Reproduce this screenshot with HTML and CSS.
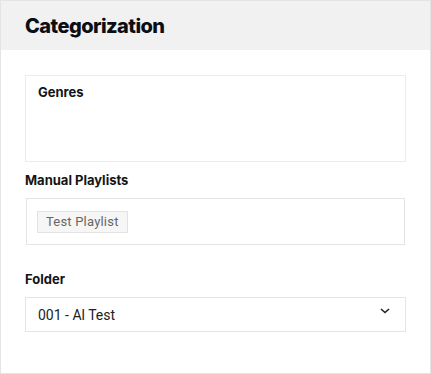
FILE: index.html
```html
<!DOCTYPE html>
<html>
<head>
<meta charset="utf-8">
<link rel="stylesheet" href="styles.css">
</head>
<body>
<div class="panel">
  <div class="header"><h2 class="title">Categorization</h2></div>
  <div class="content">
    <div class="genres">
      <div class="label">Genres</div>
    </div>
    <div class="field playlists">
      <div class="label">Manual Playlists</div>
      <div class="tagbox"><span class="tag">Test Playlist</span></div>
    </div>
    <div class="field folder">
      <div class="label">Folder</div>
      <div class="select">
        <span>001 - Al Test</span>
        <svg class="chev" width="10" height="6" viewBox="0 0 10 6"><path d="M1 1 L5 4.5 L9 1" fill="none" stroke="#222" stroke-width="1.6"/></svg>
      </div>
    </div>
  </div>
</div>
</body>
</html>
```
FILE: styles.css
```css
* { box-sizing: border-box; }
body { margin: 0; font-family: Roboto, "Liberation Sans", sans-serif; color: #111; }
.panel { width: 431px; height: 374px; border: 1px solid #e4e4e4; background: #fff; }
.header { height: 49px; background: #f1f1f1; padding: 0 24px; display: flex; align-items: center; }
.title { margin: 0; font-family: Inter, Roboto, sans-serif; font-size: 20px; font-weight: 800; color: #0d0d14; letter-spacing: -0.55px; }
.content { padding: 25px 24px 0 24px; display: flex; flex-direction: column; }
.label { font-family: Inter, Roboto, sans-serif; font-size: 13px; font-weight: 700; line-height: 16px; color: #141414; }
.genres { height: 87px; border: 1px solid #ececec; padding: 8px 12px; }
.playlists { margin-top: 10px; }
.tagbox { margin: 10px 1px 0 1px; height: 47px; border: 1px solid #e4e4e4; padding: 12px 10px; }
.tag { display: inline-block; height: 22px; line-height: 20px; padding: 0 8px; background: #f6f6f6; border: 1px solid #e2e2e2; font-size: 13px; color: #666; letter-spacing: 0.2px; }
.folder { margin-top: 26px; }
.select { margin-top: 10px; height: 35px; border: 1px solid #e4e4e4; display: flex; justify-content: space-between; align-items: center; padding: 0 15px 0 12px; font-size: 14px; color: #222; }
.chev { align-self: flex-start; margin-top: 10px; }
```
